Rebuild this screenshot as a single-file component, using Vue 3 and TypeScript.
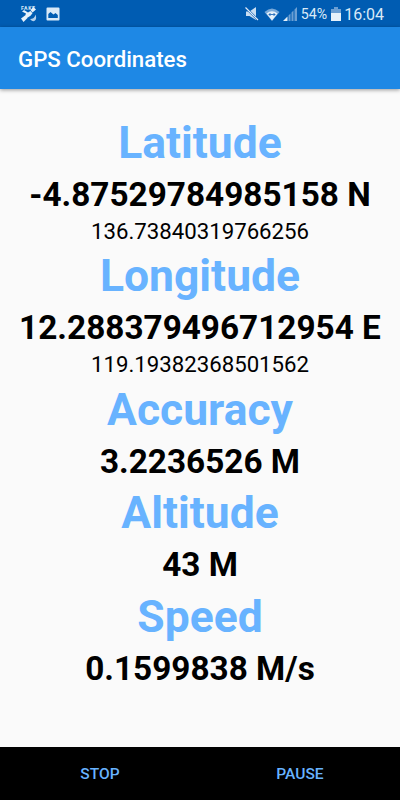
<script setup lang="ts">
interface Reading { label: string; value: string; detail?: string }
const readings: Reading[] = [
  { label: 'Latitude', value: '-4.87529784985158 N', detail: '136.73840319766256' },
  { label: 'Longitude', value: '12.288379496712954 E', detail: '119.19382368501562' },
  { label: 'Accuracy', value: '3.2236526 M' },
  { label: 'Altitude', value: '43 M' },
  { label: 'Speed', value: '0.1599838 M/s' },
]
</script>

<template>
  <div class="screen">
    <header class="status">
      <svg class="sat" viewBox="0 0 18 18" width="18" height="18">
        <text x="1" y="5" font-size="5.2" font-weight="700" fill="#d9e9f7" textLength="14">FAKE</text>
        <path d="M1 13.500l4-3 2.500 2.500-4 4zM10.500 5l3-3 2.500 2.500-3.500 3zM2 6.500L4 5l4 2.500L10.500 6l2 2.200-2 2.600-3.500 2.200-2-2 1-2.500z" fill="#e6f1fa" />
        <path d="M10 14q4.500 0 5.500-4.500 1.500 4-.5 6t-5-1.500z" fill="#b3d0ec" />
      </svg>
      <svg class="pic" viewBox="0 0 14 14" width="14" height="14">
        <path fill-rule="evenodd" d="M1.500 .500h11q1 0 1 1v11q0 1-1 1h-11q-1 0-1-1v-11q0-1 1-1zM2.300 11h9.500V8L9.500 6 7.500 7.500 4.500 5 2.300 7z" fill="#d9e9f7" />
      </svg>
      <span class="spacer"></span>
      <svg class="mute" viewBox="0 0 14 14" width="14" height="14">
        <path d="M1 4.500h3.500L11 0v13L4.500 9H1z" fill="#c9def2" />
        <path d="M.5 .5l12.500 12.500" stroke="#0759b3" stroke-width="2.200" />
        <path d="M.5 .5l12.500 12.500" stroke="#e6f1fa" stroke-width="1.100" />
      </svg>
      <svg class="wifi" viewBox="0 0 16 14" width="16" height="14">
        <path d="M.5 5Q8-2 15.500 5L8 14z" fill="#78a9d9" />
        <path d="M2.500 6.500Q8 2 13.500 6.500L8 13.500z" fill="#e6f1fa" />
        <path d="M5 7.500h6M6.500 6L5 7.500 6.500 9M9.500 6L11 7.500 9.500 9" fill="none" stroke="#0759b3" stroke-width=".8" />
      </svg>
      <svg class="signal" viewBox="0 0 14 14" width="14" height="14">
        <path d="M0 14l4.500-4.500V14z" fill="#e6f1fa" />
        <path d="M5.500 8.500l2-2V14h-2zM8.500 5.500l2-2V14h-2zM11.500 2.500L14 0v14h-2.500z" fill="#6b9fd3" />
      </svg>
      <span class="pct">54%</span>
      <svg class="battery" viewBox="0 0 10 14" width="10" height="14">
        <path d="M3 0h4v2h3v5H0V2h3z" fill="#6b9fd3" /><path d="M0 6h10v8H0z" fill="#e6f1fa" />
      </svg>
      <span class="clock">16:04</span>
    </header>
    <div class="appbar">GPS Coordinates</div>
    <main class="readings">
      <section v-for="r in readings" :key="r.label">
        <h2>{{ r.label }}</h2>
        <p class="value">{{ r.value }}</p>
        <p v-if="r.detail" class="detail">{{ r.detail }}</p>
      </section>
    </main>
    <footer class="actions"><button>STOP</button><button>PAUSE</button></footer>
  </div>
</template>

<style>
body { margin: 0; }
</style>
<style scoped>
.screen { width: 400px; height: 800px; display: flex; flex-direction: column; background: #fafafa; font-family: Roboto, sans-serif; overflow: hidden; }
.status { height: 27px; flex: none; display: flex; align-items: center; background: #005cb2; color: #d9e9f7; padding: 0 16px 0 20px; box-sizing: border-box; font-size: 16px; }
.status span { line-height: 27px; padding-top: 1px; }
.pic { margin-left: 8px; }
.spacer { flex: 1; }
.wifi { margin-left: 5px; }
.signal { margin-left: 3px; }
.pct { margin-left: 4px; font-size: 14.200px; }
.battery { margin: 0 3px 0 4px; }
.appbar { height: 62px; flex: none; display: flex; align-items: center; padding: 2px 18px 0; box-sizing: border-box; background: #1e88e5; color: #fff; font-size: 22.220px; font-weight: 500; box-shadow: 0 1px 4px rgba(0,0,0,.4); }
.readings { flex: 1; min-height: 0; padding-top: 28px; text-align: center; color: #000; }
h2 { margin: 0; font-size: 44.440px; line-height: 52px; font-weight: 700; color: #68b3ff; }
p { margin: 0; white-space: nowrap; }
.value { font-size: 33.330px; line-height: 51px; font-weight: 700; margin-bottom: .6px; }
.detail { font-size: 22.220px; line-height: 20px; margin-bottom: 9.800px; }
.actions { height: 53px; flex: none; display: grid; grid-template-columns: 1fr 1fr; background: #000; }
button { border: 0; background: none; padding: 1px 0 0; color: #68b3ff; font: 500 15.550px Roboto, sans-serif; }
</style>
